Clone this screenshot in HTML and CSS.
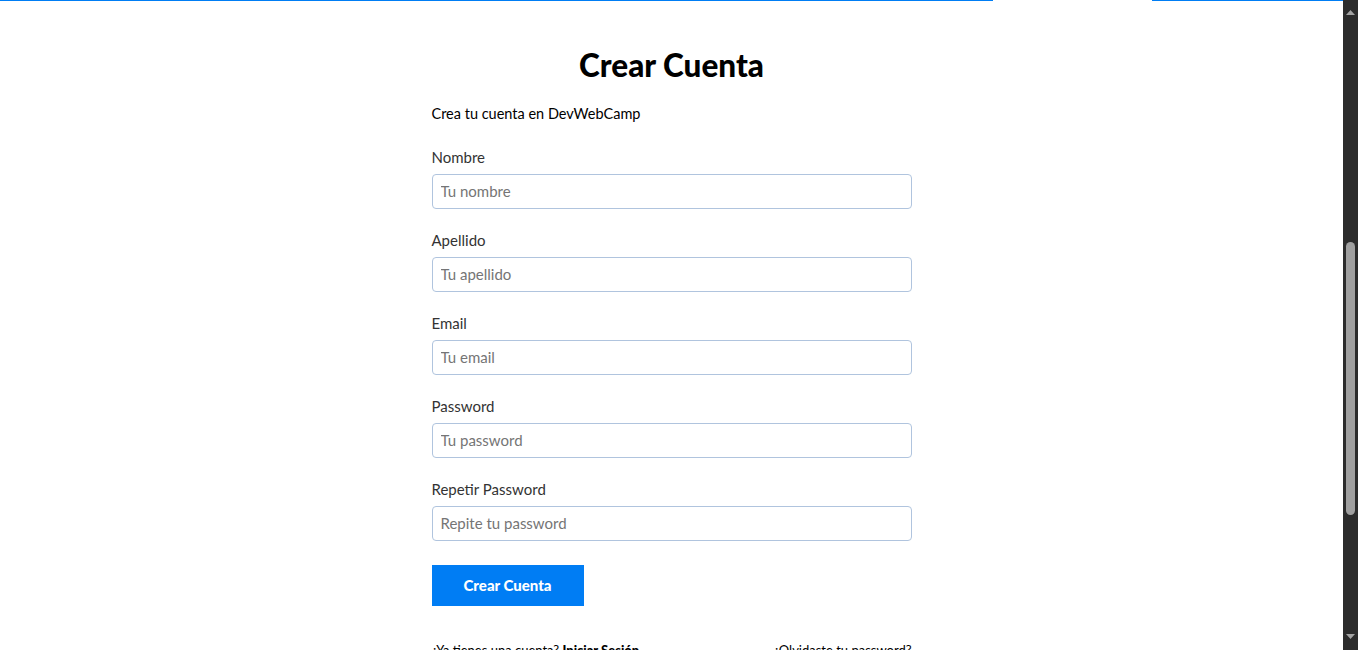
FILE: index.html
```html
<!DOCTYPE html>
<html lang="es">
<head>
<meta charset="utf-8">
<title>Crear Cuenta - DevWebCamp</title>
<link rel="stylesheet" href="styles.css">
</head>
<body>
<div class="viewport">
  <div class="page">
    <div class="header-edge"><span class="edge edge-a"></span><span class="edge-gap"></span><span class="edge edge-b"></span></div>
    <main class="auth">
      <h1 class="auth__heading">Crear Cuenta</h1>
      <p class="auth__text">Crea tu cuenta en DevWebCamp</p>
      <form class="form">
        <div class="form__field">
          <label class="form__label" for="nombre">Nombre</label>
          <input class="form__input" type="text" id="nombre" placeholder="Tu nombre">
        </div>
        <div class="form__field">
          <label class="form__label" for="apellido">Apellido</label>
          <input class="form__input" type="text" id="apellido" placeholder="Tu apellido">
        </div>
        <div class="form__field">
          <label class="form__label" for="email">Email</label>
          <input class="form__input" type="email" id="email" placeholder="Tu email">
        </div>
        <div class="form__field">
          <label class="form__label" for="password">Password</label>
          <input class="form__input" type="password" id="password" placeholder="Tu password">
        </div>
        <div class="form__field">
          <label class="form__label" for="password2">Repetir Password</label>
          <input class="form__input" type="password" id="password2" placeholder="Repite tu password">
        </div>
        <button class="form__submit" type="button">Crear Cuenta</button>
      </form>
      <div class="acciones">
        <a class="acciones__enlace" href="#">¿Ya tienes una cuenta? <strong>Iniciar Sesión</strong></a>
        <a class="acciones__enlace" href="#">¿Olvidaste tu password?</a>
      </div>
    </main>
  </div>
  <div class="scrollbar">
    <div class="scrollbar__btn">
      <svg width="9" height="5" viewBox="0 0 9 5"><polygon points="4.5,0 9,5 0,5" fill="#a3a3a3"/></svg>
    </div>
    <div class="scrollbar__track"><div class="scrollbar__thumb"></div></div>
    <div class="scrollbar__btn scrollbar__btn--down">
      <svg width="9" height="5" viewBox="0 0 9 5"><polygon points="0,0 9,0 4.5,5" fill="#a3a3a3"/></svg>
    </div>
  </div>
</div>
</body>
</html>
```
FILE: styles.css
```css
* { box-sizing: border-box; }
html, body { margin: 0; padding: 0; height: 100%; }
body {
  font-family: "Lato", "Open Sans", sans-serif;
  background: #fff;
  color: #000;
  overflow: hidden;
}
.viewport { display: flex; height: 100vh; }
.page { flex: 1; overflow: hidden; min-width: 0; }

.header-edge { display: flex; height: 1px; }
.edge { height: 1px; background: #007df4; }
.edge-a { width: 993px; }
.edge-gap { width: 159px; }
.edge-b { flex: 1; }

.auth { width: 480px; margin: 0 auto; }
.auth__heading {
  margin: 46px 0 0;
  font-size: 31.5px;
  line-height: 36px;
  font-weight: 900;
  text-align: center;
  color: #000;
}
.auth__text {
  margin: 21px 0 0;
  font-size: 14.5px;
  line-height: 20px;
  color: #000;
}
.form { margin-top: 23px; display: flex; flex-direction: column; gap: 21px; }
.form__field { display: flex; flex-direction: column; gap: 7px; }
.form__label { font-size: 15px; line-height: 20px; color: #333; }
.form__input {
  width: 100%;
  height: 35px;
  padding: 0 8px 1px;
  border: 1px solid #b0c4de;
  border-radius: 4px;
  font-family: inherit;
  font-size: 15px;
  color: #333;
  background: #fff;
}
.form__input::placeholder { color: #757575; }
.form__submit {
  align-self: flex-start;
  margin-top: 3px;
  height: 41px;
  padding: 0 32px 1px;
  border: none;
  background: #007df4;
  color: #fff;
  font-family: inherit;
  font-size: 15px;
  font-weight: 900;
}
.acciones { display: flex; justify-content: space-between; margin-top: 34px; }
.acciones__enlace { font-size: 13px; line-height: 20px; color: #000; text-decoration: none; }
.acciones__enlace strong { font-weight: 900; }

.scrollbar { width: 15px; background: #2c2c2c; display: flex; flex-direction: column; }
.scrollbar__btn { height: 17px; display: flex; justify-content: center; align-items: flex-end; padding-bottom: 2px; }
.scrollbar__btn--down { align-items: flex-start; padding: 0; height: 16px; }
.scrollbar__btn svg { display: block; }
.scrollbar__track { flex: 1; display: flex; justify-content: center; }
.scrollbar__thumb { width: 9px; height: 273px; margin-top: 225px; border-radius: 5px; background: #a0a0a0; }
```
